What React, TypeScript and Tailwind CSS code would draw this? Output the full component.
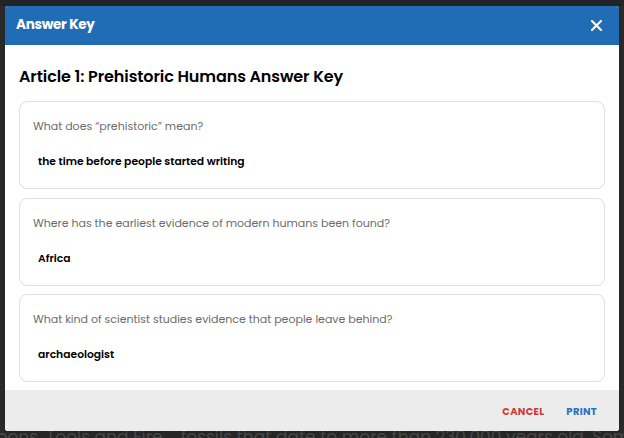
import React from "react";

const qa = [
  { q: "What does \u201cprehistoric\u201d mean?", a: "the time before people started writing" },
  { q: "Where has the earliest evidence of modern humans been found?", a: "Africa" },
  { q: "What kind of scientist studies evidence that people leave behind?", a: "archaeologist" },
];

export default function App() {
  return (
    <div
      className="relative w-[624px] h-[438px] overflow-hidden bg-[#2a2a2a]"
      style={{ fontFamily: "Poppins, Inter, 'Noto Sans', sans-serif" }}
    >
      {/* dimmed page behind */}
      <div className="h-[6px] bg-[#202328]" />
      <div className="flex pt-[421px] text-[17px] leading-[20px] text-[#4d4d4d] whitespace-nowrap">
        <div className="w-[174px] -ml-[4px] border-r border-[#333]">pons, Tools and Fire</div>
        <div className="pl-[17px]">fossils that date to more than 230,000 years old. Some evid</div>
      </div>

      {/* modal */}
      <div className="absolute left-[5px] top-[6px] w-[614px] h-[425px] bg-white rounded-[3px] flex flex-col overflow-hidden shadow-lg">
        <div className="h-[39px] shrink-0 bg-[#216db5] flex items-center justify-between pl-[11px] pr-[17px]">
          <span className="text-white text-[13.5px] font-bold tracking-[-0.3px]">Answer Key</span>
          <svg width="11" height="11" viewBox="0 0 11 11">
            <path d="M1 1L10 10M10 1L1 10" stroke="white" strokeWidth="2" strokeLinecap="square" />
          </svg>
        </div>
        <div className="flex-1 px-[14px] pt-[21px]">
          <h2 className="text-[16px] leading-[22px] font-semibold text-black tracking-[-0.1px]">
            Article 1: Prehistoric Humans Answer Key
          </h2>
          <div className="mt-[13px] flex flex-col gap-[8.5px]">
            {qa.map((item) => (
              <div
                key={item.a}
                className="h-[88px] border border-[#dedede] rounded-[8px] pt-[16px] px-[13px]"
              >
                <div className="text-[11px] leading-[16px] text-[#6b6b6b]">{item.q}</div>
                <div className="mt-[20px] pl-[5px] text-[10.75px] leading-[16px] font-semibold text-black">
                  {item.a}
                </div>
              </div>
            ))}
          </div>
        </div>
        <div className="h-[41px] shrink-0 bg-[#ececec] flex items-center justify-end gap-[22px] pr-[22px] pt-[1px]">
          <span className="text-[10px] font-bold tracking-[0.3px] text-[#d0393a]">CANCEL</span>
          <span className="text-[10px] font-bold tracking-[0.3px] text-[#2a73bf]">PRINT</span>
        </div>
      </div>
    </div>
  );
}
